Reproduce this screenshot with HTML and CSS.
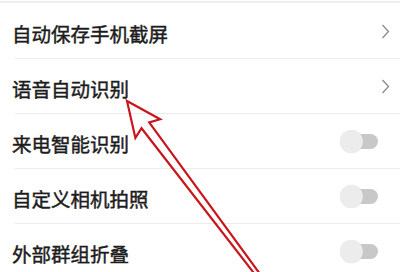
FILE: index.html
```html
<!DOCTYPE html>
<html lang="zh-CN">
<head>
<meta charset="utf-8">
<title>设置</title>
<link rel="stylesheet" href="styles.css">
</head>
<body>
<div class="top-line"></div>
<ul class="list">
  <li class="row">
    <span class="label">自动保存手机截屏</span>
    <svg class="chevron" width="9" height="15" viewBox="0 0 9 15"><path d="M1.5 1 L7.5 7.5 L1.5 14" fill="none" stroke="#8c8c8c" stroke-width="1.3"/></svg>
  </li>
  <li class="row">
    <span class="label">语音自动识别</span>
    <svg class="chevron" width="9" height="15" viewBox="0 0 9 15"><path d="M1.5 1 L7.5 7.5 L1.5 14" fill="none" stroke="#8c8c8c" stroke-width="1.3"/></svg>
  </li>
  <li class="row">
    <span class="label">来电智能识别</span>
    <span class="toggle"><span class="track"></span><span class="knob"></span></span>
  </li>
  <li class="row">
    <span class="label">自定义相机拍照</span>
    <span class="toggle"><span class="track"></span><span class="knob"></span></span>
  </li>
  <li class="row">
    <span class="label">外部群组折叠</span>
    <span class="toggle"><span class="track"></span><span class="knob"></span></span>
  </li>
</ul>
<svg class="arrow" width="400" height="272" viewBox="0 0 400 272">
  <g transform="translate(127 101) rotate(53)">
    <polygon points="0,0 34.5,-15.5 30.5,-4.8 240,-1.8 240,1.8 30.5,4.8 34.5,15.5" fill="none" stroke="#c8161c" stroke-width="2.2" stroke-linejoin="miter"/>
  </g>
</svg>
</body>
</html>
```

FILE: styles.css
```css
html, body {
  margin: 0;
  padding: 0;
  background: #ffffff;
}
body {
  position: relative;
  width: 400px;
  height: 272px;
  overflow: hidden;
  font-family: "Noto Sans CJK SC", "Noto Sans", sans-serif;
}
.top-line {
  height: 2px;
  margin: 1px 0 1px;
  background: #eceef1;
}
.list {
  list-style: none;
  margin: 0;
  padding: 0;
}
.row {
  box-sizing: border-box;
  height: 55px;
  margin-left: 15px;
  padding-right: 10px;
  border-bottom: 1px solid #ececec;
  display: flex;
  align-items: center;
  justify-content: space-between;
}
.label {
  margin-left: -3px;
  margin-top: 4px;
  font-size: 19.5px;
  font-weight: 400;
  color: #1c1c1c;
  -webkit-text-stroke: 0.45px #1c1c1c;
}
.chevron {
  display: block;
}
.toggle {
  position: relative;
  width: 38px;
  height: 23px;
  margin-right: 12px;
}
.track {
  position: absolute;
  right: 0;
  top: 4px;
  width: 32px;
  height: 15px;
  border-radius: 8px;
  background: #c8c8c8;
}
.knob {
  position: absolute;
  left: 0;
  top: 0;
  width: 23px;
  height: 23px;
  border-radius: 50%;
  background: #ececec;
  box-shadow: 0 0 1px rgba(0, 0, 0, 0.12);
}
.arrow {
  position: absolute;
  left: 0;
  top: 0;
  pointer-events: none;
}
```
